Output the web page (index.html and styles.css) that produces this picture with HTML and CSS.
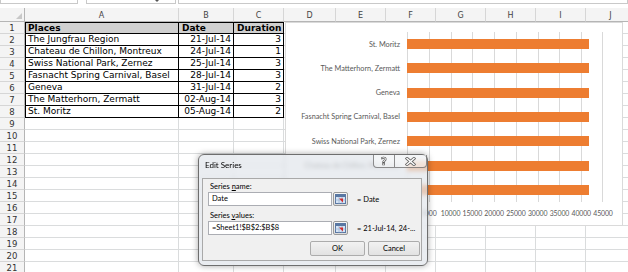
FILE: index.html
```html
<!DOCTYPE html>
<html lang="en">
<head>
    <title>Edit Series</title>
    <link rel="stylesheet" href="styles.css">
</head>
<body>
<div class="window">
    <div class="formula-strip">
        <div class="strip-box name-box"></div>
        <div class="strip-box func-box"><span class="drop"></span></div>
        <div class="strip-box bar-box"></div>
    </div>
    <div class="sheet"></div>

    <div class="chart">
        <div class="categories"></div>
        <div class="plot">
            <div class="gridlines"></div>
            <div class="bars"></div>
        </div>
        <div class="axis"></div>
    </div>

    <div class="dialog">
        <div class="title-bar">
            <span class="title">Edit Series</span>
            <div class="caption-buttons">
                <div class="caption-btn help">?</div>
                <div class="caption-btn close">
                    <svg width="11" height="9" viewBox="0 0 11 9">
                        <path d="M2 1.5 L9 7.5 M9 1.5 L2 7.5" stroke="#666" stroke-width="3" stroke-linecap="square"/>
                        <path d="M2 1.5 L9 7.5 M9 1.5 L2 7.5" stroke="#fff" stroke-width="1.4" stroke-linecap="square"/>
                    </svg>
                </div>
            </div>
        </div>
        <div class="client">
            <div class="field-label">Series <u>n</u>ame:</div>
            <div class="field-row">
                <div class="input">Date</div>
                <div class="ref-btn"></div>
                <span class="preview">= Date</span>
            </div>
            <div class="field-label second">Series <u>v</u>alues:</div>
            <div class="field-row">
                <div class="input">=Sheet1!$B$2:$B$8</div>
                <div class="ref-btn"></div>
                <span class="preview">= 21-Jul-14, 24-...</span>
            </div>
            <div class="buttons">
                <button class="dlg-button">OK</button>
                <button class="dlg-button">Cancel</button>
            </div>
        </div>
    </div>
</div>

<script>
    const columns = ["A", "B", "C", "D", "E", "F", "G", "H", "I", "J"]
    const data = [
        ["Places", "Date", "Duration"],
        ["The Jungfrau Region", "21-Jul-14", "3"],
        ["Chateau de Chillon, Montreux", "24-Jul-14", "1"],
        ["Swiss National Park, Zernez", "25-Jul-14", "3"],
        ["Fasnacht Spring Carnival, Basel", "28-Jul-14", "3"],
        ["Geneva", "31-Jul-14", "2"],
        ["The Matterhorn, Zermatt", "02-Aug-14", "3"],
        ["St. Moritz", "05-Aug-14", "2"]
    ]
    const serials = [41841, 41844, 41845, 41848, 41851, 41853, 41856]

    const makeSheet = () => {
        const sheet = document.querySelector(".sheet")
        const corner = document.createElement("div")
        corner.classList.add("head", "corner")
        sheet.appendChild(corner)

        columns.forEach(name => {
            const head = document.createElement("div")
            head.classList.add("head", "col-head")
            head.textContent = name
            sheet.appendChild(head)
        })

        for (let row = 1; row <= 21; row++) {
            const head = document.createElement("div")
            head.classList.add("head", "row-head")
            head.textContent = row
            sheet.appendChild(head)

            for (let col = 0; col < columns.length; col++) {
                const cell = document.createElement("div")
                cell.classList.add("cell")
                const values = data[row - 1]
                if (values && col < 3) {
                    cell.classList.add("table-cell")
                    cell.textContent = values[col]
                    if (row === 1) cell.classList.add("title-row")
                    else if (col > 0) cell.classList.add("number")
                    if (col === 0) cell.classList.add("first-col")
                }
                sheet.appendChild(cell)
            }
        }
    }

    const makeChart = () => {
        const categories = document.querySelector(".categories")
        const bars = document.querySelector(".bars")
        const gridlines = document.querySelector(".gridlines")
        const axis = document.querySelector(".axis")

        for (let i = data.length - 1; i >= 1; i--) {
            const label = document.createElement("div")
            label.classList.add("category")
            label.textContent = data[i][0]
            categories.appendChild(label)

            const barRow = document.createElement("div")
            barRow.classList.add("bar-row")
            const bar = document.createElement("div")
            bar.classList.add("bar")
            bar.style.width = (serials[i - 1] / 45000 * 100) + "%"
            barRow.appendChild(bar)
            bars.appendChild(barRow)
        }

        for (let i = 0; i < 9; i++) {
            gridlines.appendChild(document.createElement("div"))
        }

        for (let i = 0; i <= 9; i++) {
            const tick = document.createElement("div")
            tick.textContent = i * 5000
            axis.appendChild(tick)
        }
    }

    makeSheet()
    makeChart()

    const refIcon = '<svg width="11" height="10" viewBox="0 0 11 10">' +
        '<rect x="0.5" y="0.5" width="10" height="9" fill="#d6e4f5" stroke="#5a78a3"/>' +
        '<rect x="1" y="1" width="9" height="2" fill="#5a78a3"/>' +
        '<path d="M4 3 V9.5 M7 3 V9.5 M0.5 6 H10.5" stroke="#9fb5d3" stroke-width="0.8"/>' +
        '<path d="M4 4.5 L8 4.5 L8 8.5 Z" fill="#d42a2a"/>' +
        '</svg>'
    document.querySelectorAll(".ref-btn").forEach(button => {
        button.innerHTML = refIcon
    })
</script>
</body>
</html>
```

FILE: styles.css
```css
body, html {
    margin: 0;
    width: 628px;
    height: 272px;
    overflow: hidden;
    background-color: #fff;
}

.window {
    position: relative;
    width: 628px;
    height: 272px;
    overflow: hidden;
    font-family: "DejaVu Sans", sans-serif;
}

.formula-strip {
    display: flex;
    height: 8px;
}

.strip-box {
    box-sizing: border-box;
    height: 4px;
    border: 1px solid #c9c9c9;
    border-top: none;
    position: relative;
}

.name-box {
    width: 78px;
    margin-right: 8px;
}

.func-box {
    width: 90px;
    margin-right: 2px;
}

.func-box .drop {
    position: absolute;
    left: 68px;
    top: 0;
    border-left: 2px solid transparent;
    border-right: 2px solid transparent;
    border-top: 2px solid #555;
}

.bar-box {
    flex: 1;
}

.sheet {
    display: grid;
    grid-template-columns: 25px 154px 55px 50px 52px repeat(6, 50px);
    grid-template-rows: 14px repeat(21, 12px);
}

.head {
    box-sizing: border-box;
    background-color: #f4f4f4;
    border-right: 1px solid #d6d6d6;
    border-bottom: 1px solid #d6d6d6;
    color: #444;
    font-size: 8px;
    display: flex;
    align-items: center;
    justify-content: center;
}

.corner {
    position: relative;
    border-right-color: #b5b5b5;
    border-bottom-color: #b5b5b5;
}

.corner::after {
    content: "";
    position: absolute;
    right: 2px;
    bottom: 2px;
    border-left: 6px solid transparent;
    border-bottom: 6px solid #c8c8c8;
}

.col-head {
    border-bottom-color: #b5b5b5;
    padding-top: 1px;
}

.row-head {
    border-right-color: #b5b5b5;
    font-size: 8.5px;
    color: #333;
    padding-top: 1px;
}

.cell {
    box-sizing: border-box;
    border-right: 1px solid #dadcdd;
    border-bottom: 1px solid #dadcdd;
    font-size: 9px;
    line-height: 11px;
    padding: 0 2px 0 3px;
    white-space: nowrap;
    overflow: hidden;
    color: #000;
}

.table-cell {
    border-right-color: #000;
    border-bottom-color: #000;
}

.table-cell.first-col {
    box-shadow: inset 1px 0 0 #000;
}

.table-cell.title-row {
    background-color: #d0d0d0;
    font-weight: bold;
    box-shadow: inset 0 1px 0 #000;
    line-height: 12px;
}

.table-cell.title-row.first-col {
    box-shadow: inset 1px 1px 0 #000;
}

.table-cell.number {
    text-align: right;
}

/* chart floating over the sheet */
.chart {
    position: absolute;
    left: 285px;
    top: 22px;
    width: 338px;
    height: 204px;
    box-sizing: border-box;
    background-color: #fff;
    border: 1px solid #dadada;
    padding-top: 9px;
    display: grid;
    grid-template-columns: 121px 196px;
    grid-template-rows: 170px auto;
    font-family: Lato, "Liberation Sans", sans-serif;
    font-size: 7.3px;
    color: #595959;
}

.categories {
    display: flex;
    flex-direction: column;
}

.category {
    flex: 1;
    display: flex;
    align-items: center;
    justify-content: flex-end;
    padding-right: 7px;
    white-space: nowrap;
}

.plot {
    position: relative;
}

.gridlines {
    display: grid;
    grid-template-columns: repeat(9, 1fr);
    height: 100%;
}

.gridlines div {
    border-left: 1px solid #d9d9d9;
}

.gridlines div:last-child {
    border-right: 1px solid #d9d9d9;
}

.bars {
    position: absolute;
    top: 0;
    left: 0;
    right: 0;
    bottom: 0;
    display: flex;
    flex-direction: column;
}

.bar-row {
    flex: 1;
    display: flex;
    align-items: center;
}

.bar {
    height: 10px;
    background-color: #ed7d31;
}

.axis {
    grid-column: 2;
    margin-left: -10.9px;
    width: 217.8px;
    margin-top: 6px;
    display: grid;
    grid-template-columns: repeat(10, 1fr);
    text-align: center;
    white-space: nowrap;
    line-height: 10px;
    font-size: 6.9px;
    letter-spacing: -0.1px;
}

/* Edit Series dialog */
.dialog {
    position: absolute;
    left: 198px;
    top: 154px;
    width: 230px;
    height: 112px;
    box-sizing: border-box;
    border: 1px solid #6e6e6e;
    border-radius: 6px;
    background-color: rgba(226, 230, 236, 0.72);
    backdrop-filter: blur(2px);
    box-shadow: 0 0 6px rgba(0, 0, 0, 0.35);
    display: flex;
    flex-direction: column;
    font-family: Lato, "Liberation Sans", sans-serif;
    font-size: 7.5px;
    color: #000;
}

.title-bar {
    height: 23px;
    display: flex;
    justify-content: space-between;
}

.title {
    padding: 5px 0 0 6px;
    line-height: 11px;
    font-size: 8px;
}

.caption-buttons {
    display: flex;
    align-self: flex-start;
}

.caption-btn {
    box-sizing: border-box;
    height: 13px;
    border: 1px solid rgba(70, 70, 70, 0.6);
    border-top: none;
    background-color: rgba(255, 255, 255, 0.45);
    display: flex;
    align-items: center;
    justify-content: center;
}

.caption-btn.help {
    width: 21px;
    border-radius: 0 0 0 4px;
    border-right: none;
    font-family: "DejaVu Sans", sans-serif;
    font-weight: bold;
    font-size: 10px;
    color: #fff;
    -webkit-text-stroke: 0.7px #555;
}

.caption-btn.close {
    width: 33px;
    border-radius: 0 0 4px 0;
}

.client {
    flex: 1;
    margin: 0 5px 4px 3px;
    box-sizing: border-box;
    background-color: #f0f0f0;
    border: 1px solid #a9a9a9;
    padding: 3px 0 0 5px;
}

.field-label {
    line-height: 10px;
    padding-left: 2px;
}

.field-label.second {
    margin-top: 5px;
}

.field-row {
    display: flex;
    align-items: center;
    height: 14px;
}

.input {
    box-sizing: border-box;
    width: 124px;
    height: 14px;
    border: 1px solid #abadb3;
    background-color: #fff;
    padding-left: 3px;
    line-height: 12px;
    white-space: nowrap;
}

.ref-btn {
    box-sizing: border-box;
    width: 15px;
    height: 14px;
    margin-left: 1px;
    border: 1px solid #9a9a9a;
    border-radius: 2px;
    background: linear-gradient(#f7f7f7, #dcdcdc);
    display: flex;
    align-items: center;
    justify-content: center;
}

.ref-btn svg {
    display: block;
}

.preview {
    margin-left: 9px;
    white-space: nowrap;
}

.buttons {
    display: flex;
    justify-content: flex-end;
    gap: 3px;
    margin-top: 6px;
    padding-right: 1px;
}

.dlg-button {
    box-sizing: border-box;
    height: 15px;
    border: 1px solid #acacac;
    border-radius: 2px;
    background: linear-gradient(#f2f2f2, #e2e2e2);
    font-family: Lato, "Liberation Sans", sans-serif;
    font-size: 7.5px;
    color: #000;
    padding: 0;
}

.dlg-button:first-child {
    width: 55px;
}

.dlg-button:last-child {
    width: 52px;
}
```
